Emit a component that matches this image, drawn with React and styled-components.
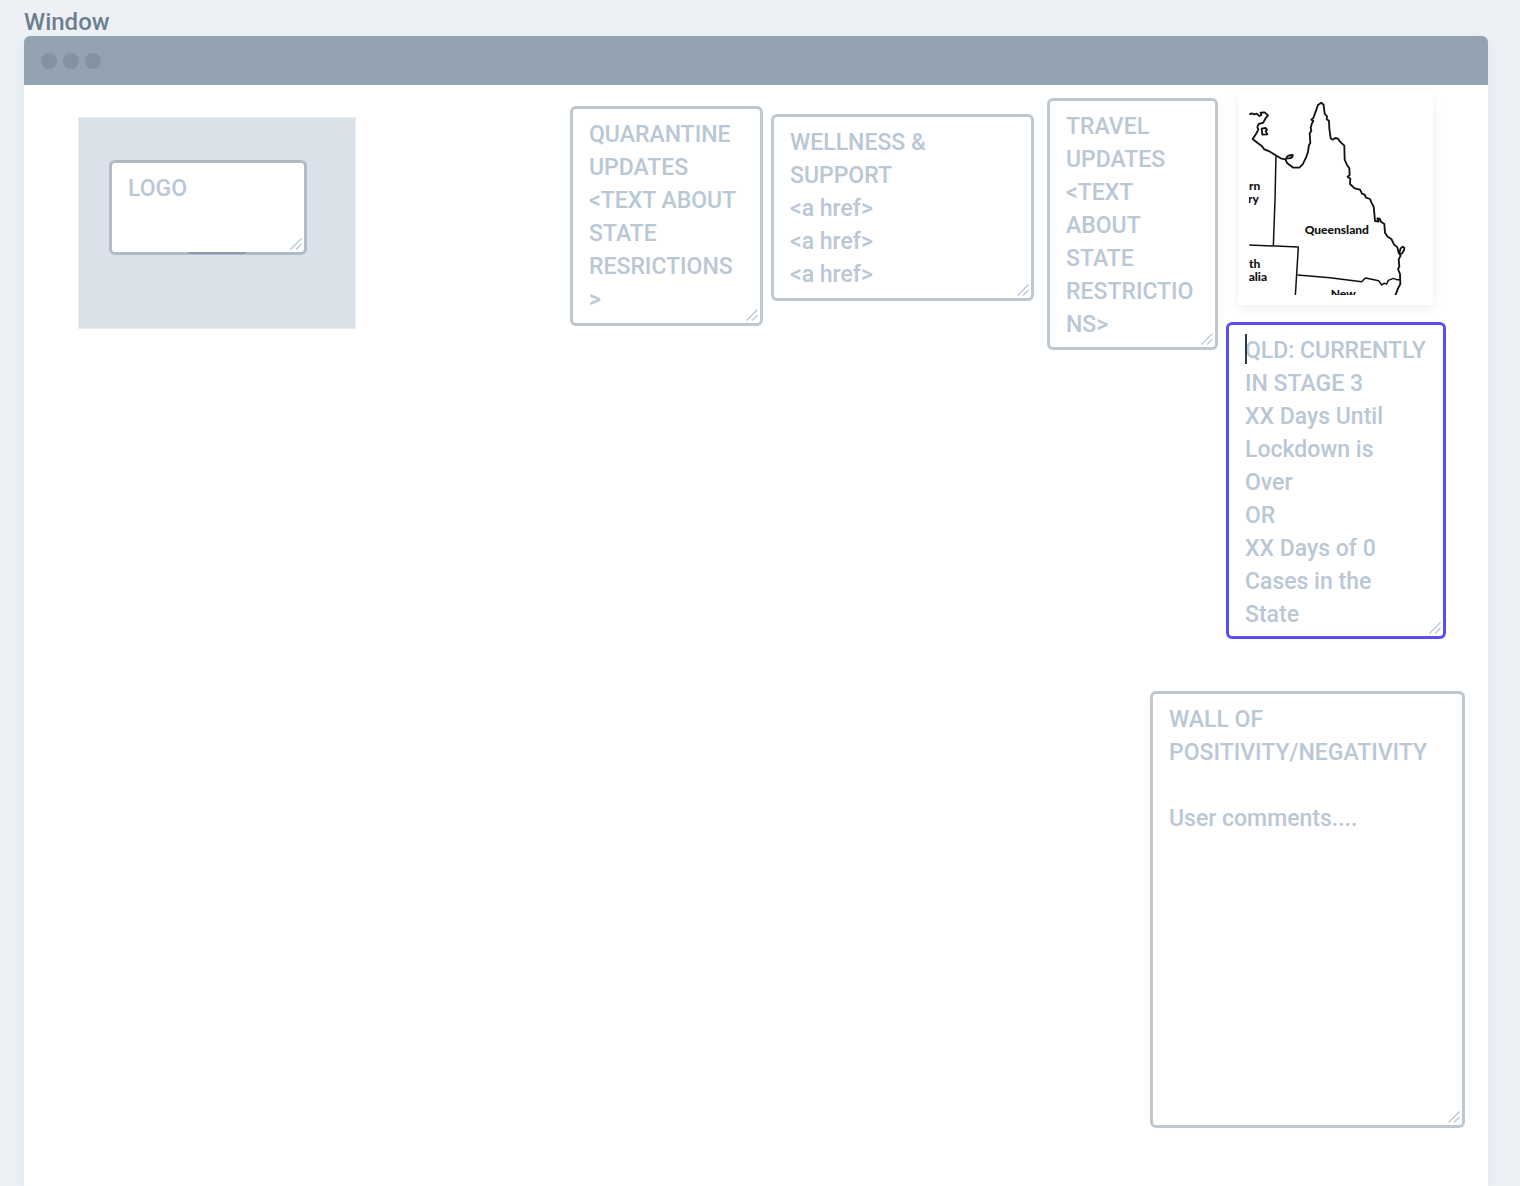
import React from "react";
import styled, { createGlobalStyle, css } from "styled-components";

const GlobalStyle = createGlobalStyle`
  *, *::before, *::after { box-sizing: border-box; }
  body {
    margin: 0;
    background: #edf1f6;
    font-family: Roboto, "Liberation Sans", sans-serif;
  }
`;

const Page = styled.main`
  display: flex;
  flex-direction: column;
  min-height: 100vh;
  padding: 8px 32px 0 24px;
`;

const WindowTitle = styled.h1`
  margin: 0;
  font-size: 24px;
  font-weight: 500;
  line-height: 28px;
  color: #6d7f8f;
`;

const WindowFrame = styled.section`
  flex: 1;
  display: flex;
  flex-direction: column;
  border-radius: 6px 6px 0 0;
  background: #fff;
  box-shadow: 0 4px 12px rgba(147, 163, 178, 0.14);
`;

const TitleBar = styled.header`
  display: flex;
  align-items: center;
  gap: 6px;
  height: 49px;
  padding: 0 17px;
  border-radius: 6px 6px 0 0;
  background: #93a3b2;
`;

const Dot = styled.span`
  width: 16px;
  height: 16px;
  border-radius: 50%;
  background: #8393a2;
`;

const Canvas = styled.div`
  position: relative;
  flex: 1;
`;

/* Anything dropped on the free canvas carries its own place and size. */
const placed = css`
  position: absolute;
  left: ${(p) => p.$x}px;
  top: ${(p) => p.$y}px;
  width: ${(p) => p.$w}px;
  height: ${(p) => p.$h}px;
`;

const PicturePlaceholder = styled.div`
  ${placed}
  display: flex;
  flex-direction: column;
  align-items: center;
  justify-content: center;
  border: 1px solid #e9eef2;
  background: #dae1e8;
`;

const PictureGlyph = styled.svg`
  display: block;
  width: 60px;
  height: 62px;
`;

const NoteBox = styled.div`
  ${placed}
`;

const NoteField = styled.textarea`
  display: block;
  width: 100%;
  height: 100%;
  margin: 0;
  padding: 9px 0 0 16px;
  border: 3px solid ${(p) => (p.$active ? "#5b4ef0" : "rgba(145, 163, 178, 0.6)")};
  border-radius: 6px;
  background: #fff;
  background-clip: padding-box;
  outline: none;
  resize: none;
  overflow: hidden;
  white-space: pre;
  font-family: inherit;
  font-size: 23px;
  font-weight: 500;
  line-height: 33px;
  color: #bac7d5;
`;

const Caret = styled.span`
  position: absolute;
  left: 19px;
  top: 12px;
  width: 2px;
  height: 30px;
  background: #2c3a47;
`;

const Grip = styled.svg`
  position: absolute;
  right: 5px;
  bottom: 5px;
  width: 12px;
  height: 12px;
`;

const MapCard = styled.figure`
  ${placed}
  margin: 0;
  padding: 9px 10px 10px 11px;
  border-radius: 4px;
  background: #fff;
  box-shadow: 0 3px 12px rgba(0, 0, 0, 0.07);
`;

const MapDrawing = styled.svg`
  display: block;
  width: 100%;
  height: 100%;
  font-family: Lato, "Open Sans", sans-serif;
  font-size: 36px;
  font-weight: 900;
`;

function Note({ label, text, active, ...place }) {
  return (
    <NoteBox {...place}>
      <NoteField aria-label={label} defaultValue={text} $active={active} spellCheck={false} />
      {active && <Caret />}
      <Grip viewBox="0 0 12 12" fill="none" stroke="#bac7d5" strokeWidth="1.3" aria-hidden="true">
        <path d="M0.5 11.5 L11.5 0.5 M6 11.5 L11.5 6" />
      </Grip>
    </NoteBox>
  );
}

function QueenslandMap() {
  return (
    <MapDrawing viewBox="57 48 522 582" role="img" aria-label="Map of Queensland">
      <g fill="none" stroke="#111" strokeWidth="5.5" strokeLinejoin="round">
        <path d="M58 88 L65 85 L72 88 L80 86 L88 93 L94 90 L92 83 L104 82 L114 91 L106 101 L100 113 L86 117 L82 126 L85 134 L78 147 L68 162 L84 175 L96 184 L103 193 L118 199 L137 211 L152 220 L166 223 L172 235 L190 248 L208 248 L218 238 L228 218 L234 200 L237 180 L241 174 L239 145 L244 138 L242 128 L246 115 L250 108 L244 104 L250 99 L258 77 L264 60 L274 53 L281 60 L284 86 L291 94 L290 102 L297 108 L298 130 L302 160 L308 164 L316 159 L324 161 L330 170 L343 182 L344 224 L351 240 L358 250 L359 270 L353 275 L361 281 L360 297 L374 310 L390 314 L396 326 L404 329 L408 338 L420 342 L424 352 L431 365 L433 385 L435 408 L446 410 L442 400 L449 401 L453 410 L463 417 L465 443 L473 455 L484 462 L492 478 L502 487 L506 503 L512 512 L506 523 L508 545 L504 552 L510 567 L511 597 L504 610 L496 632" />
        <path d="M508 504 L512 490 L518 485 L523 488 L522 496 L515 506 Z" />
        <path d="M95 131 L107 129 L111 134 L107 139 L112 148 L97 149 Z" />
        <path d="M170 217 L167 225 M170 217 Q172 211 188 210 Q190 217 178 220 Q170 221 170 217" />
        <path strokeWidth="4.5" d="M138 211 L135 345 L130 482 M58 480 L205 486 L196 632 M203 570 L300 578 L395 590 L406 579 L425 583 L446 587 L455 600 L462 595 L470 597 L475 586 L490 580 L500 584 L510 584" />
      </g>
      <g fill="#111">
        <text x="57" y="314">rn</text>
        <text x="54" y="354">ry</text>
        <text x="57" y="550">th</text>
        <text x="56" y="588">alia</text>
        <text x="224" y="447">Queensland</text>
        <text x="302" y="638">New</text>
      </g>
    </MapDrawing>
  );
}

const NOTES = [
  { label: "Logo", $x: 85, $y: 75, $w: 198, $h: 95, text: "LOGO" },
  {
    label: "Quarantine updates", $x: 546, $y: 21, $w: 193, $h: 220,
    text: "QUARANTINE\nUPDATES\n<TEXT ABOUT\nSTATE\nRESRICTIONS\n>",
  },
  {
    label: "Wellness and support", $x: 747, $y: 29, $w: 263, $h: 187,
    text: "WELLNESS &\nSUPPORT\n<a href>\n<a href>\n<a href>",
  },
  {
    label: "Travel updates", $x: 1023, $y: 13, $w: 171, $h: 252,
    text: "TRAVEL\nUPDATES\n<TEXT\nABOUT\nSTATE\nRESTRICTIO\nNS>",
  },
  {
    label: "Queensland status", $x: 1202, $y: 237, $w: 220, $h: 317, active: true,
    text: "QLD: CURRENTLY\nIN STAGE 3\nXX Days Until\nLockdown is\nOver\nOR\nXX Days of 0\nCases in the\nState",
  },
  {
    label: "Wall of positivity and negativity", $x: 1126, $y: 606, $w: 315, $h: 437,
    text: "WALL OF\nPOSITIVITY/NEGATIVITY\n\nUser comments....",
  },
];

export default function App() {
  return (
    <>
      <GlobalStyle />
      <Page>
        <WindowTitle>Window</WindowTitle>
        <WindowFrame>
          <TitleBar>
            <Dot />
            <Dot />
            <Dot />
          </TitleBar>
          <Canvas>
            <PicturePlaceholder $x={54} $y={32} $w={278} $h={212}>
              <PictureGlyph viewBox="0 0 60 62" aria-hidden="true">
                <rect width="60" height="62" rx="4" fill="#8393a2" />
              </PictureGlyph>
            </PicturePlaceholder>
            <MapCard $x={1214} $y={7} $w={195} $h={213}>
              <QueenslandMap />
            </MapCard>
            {NOTES.map((note) => (
              <Note key={note.label} {...note} />
            ))}
          </Canvas>
        </WindowFrame>
      </Page>
    </>
  );
}
